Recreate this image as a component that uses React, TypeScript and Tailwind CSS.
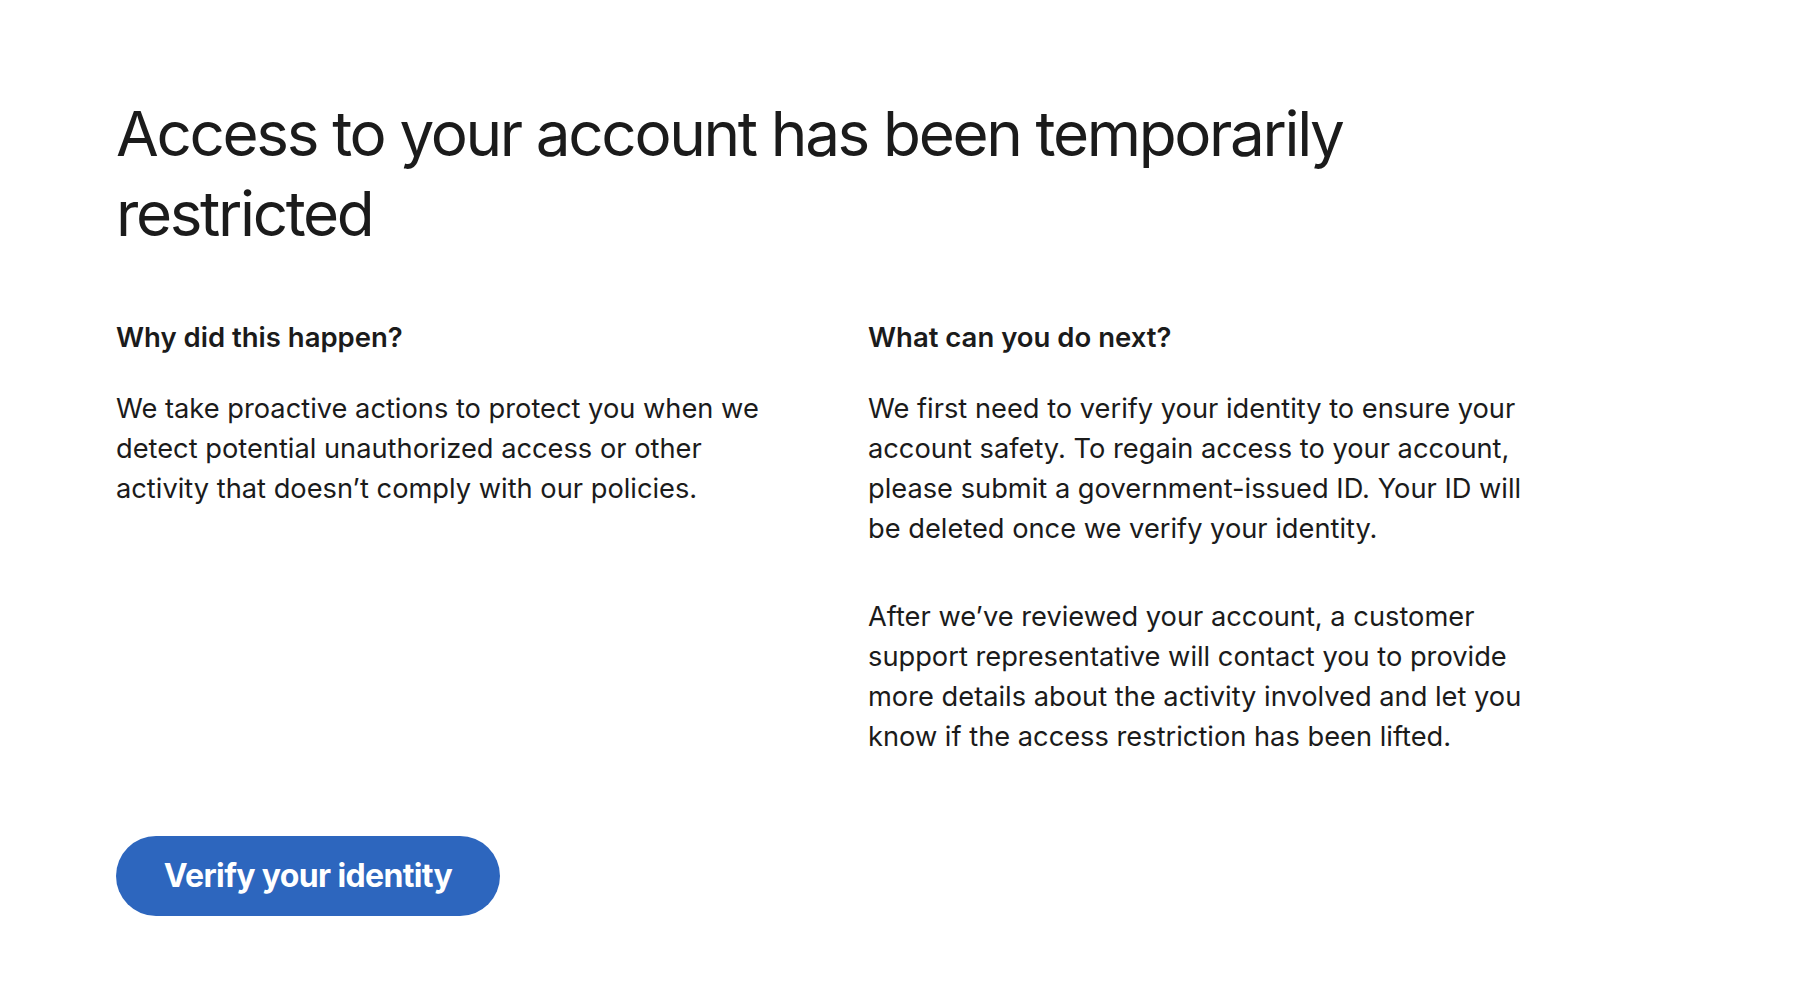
export default function App() {
  return (
    <div className="min-h-screen bg-white text-[#1b1b1b] font-['Inter',sans-serif]">
      <div className="pl-[116px] pt-[94px]">
        <h1 className="max-w-[1300px] text-[62px] leading-[80px] font-normal tracking-[-0.038em]">
          Access to your account has been temporarily restricted
        </h1>

        <div className="mt-[67px] grid grid-cols-[680px_680px] gap-x-[72px]">
          <section>
            <h2 className="text-[27.5px] leading-[32px] font-semibold">Why did this happen?</h2>
            <p className="mt-[36px] text-[27.25px] leading-[40px]">
              We take proactive actions to protect you when we detect potential unauthorized
              access or other activity that doesn’t comply with our policies.
            </p>
          </section>
          <section>
            <h2 className="text-[27.5px] leading-[32px] font-semibold">What can you do next?</h2>
            <p className="mt-[36px] text-[27.25px] leading-[40px]">
              We first need to verify your identity to ensure your account safety. To regain
              access to your account, please submit a government-issued ID. Your ID will be
              deleted once we verify your identity.
            </p>
            <p className="mt-[48px] text-[27.25px] leading-[40px]">
              After we’ve reviewed your account, a customer support representative will contact
              you to provide more details about the activity involved and let you know if the
              access restriction has been lifted.
            </p>
          </section>
        </div>

        <button className="mt-[79px] flex h-[80px] w-[384px] items-center justify-center rounded-full bg-[#2d66be] text-[32px] font-bold tracking-[-0.02em] text-white">
          Verify your identity
        </button>
      </div>
    </div>
  )
}
